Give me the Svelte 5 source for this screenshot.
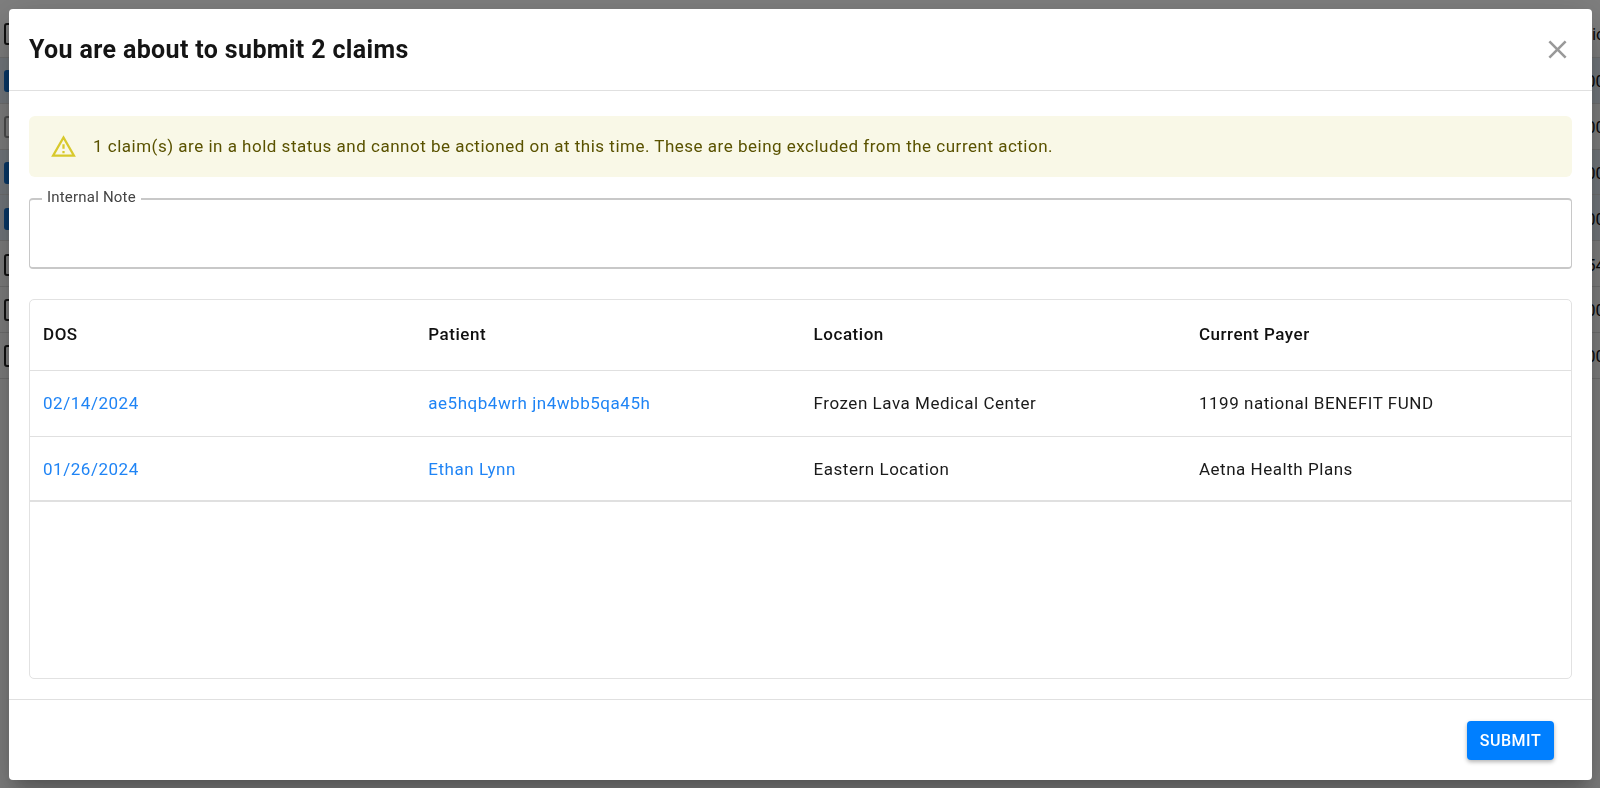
<script>
  const claims = [
    { dos: "02/14/2024", patient: "ae5hqb4wrh jn4wbb5qa45h", location: "Frozen Lava Medical Center", payer: "1199 national BENEFIT FUND" },
    { dos: "01/26/2024", patient: "Ethan Lynn", location: "Eastern Location", payer: "Aetna Health Plans" },
  ];
  // rows of the page behind the dialog
  const backRows = [
    { kind: "checked", end: "00" },
    { kind: "muted", end: "00" },
    { kind: "checked", end: "00" },
    { kind: "checked", end: "00" },
    { kind: "", end: "54" },
    { kind: "", end: "00" },
    { kind: "", end: "00" },
  ];
</script>

<div class="page">
  <div class="back-head">
    <span class="box"></span>
    <span class="end">ic</span>
  </div>
  {#each backRows as row}
    <div class="back-row" class:selected={row.kind === "checked"}>
      <span class="box {row.kind}"></span>
      <span class="end">{row.end}</span>
    </div>
  {/each}
</div>

<div class="backdrop">
  <div class="modal">
    <header class="modal-head">
      <h2>You are about to submit 2 claims</h2>
      <button class="close" aria-label="Close">
        <svg viewBox="0 0 24 24"><path d="M19 6.41 17.59 5 12 10.59 6.41 5 5 6.41 10.59 12 5 17.59 6.41 19 12 13.41 17.59 19 19 17.59 13.41 12z" /></svg>
      </button>
    </header>

    <div class="modal-body">
      <div class="alert">
        <svg width="27" height="27" viewBox="0 0 24 24"><path d="M1 21h22L12 2 1 21zm3.47-2L12 5.99 19.53 19H4.47zM11 16h2v2h-2zm0-6h2v4h-2z" /></svg>
        <span class="alert-text">1 claim(s) are in a hold status and cannot be actioned on at this time. These are being excluded from the current action.</span>
      </div>

      <fieldset class="note">
        <legend>Internal Note</legend>
      </fieldset>

      <div class="table-wrap">
        <div class="row head">
          <div>DOS</div>
          <div>Patient</div>
          <div>Location</div>
          <div>Current Payer</div>
        </div>
        {#each claims as c}
          <div class="row">
            <div class="link">{c.dos}</div>
            <div class="link">{c.patient}</div>
            <div>{c.location}</div>
            <div>{c.payer}</div>
          </div>
        {/each}
      </div>
    </div>

    <footer class="modal-foot">
      <button class="submit">SUBMIT</button>
    </footer>
  </div>
</div>

<style>
  :global(body) {
    font-family: Roboto, "Liberation Sans", sans-serif;
    overflow: hidden;
  }

  .page {
    height: 788px;
    background: #fff;
    overflow: hidden;
    padding-top: 11px;
    box-sizing: border-box;
  }

  .back-head,
  .back-row {
    display: flex;
    align-items: center;
    justify-content: space-between;
    height: 45.8px;
    box-sizing: border-box;
    border-bottom: 1px solid #e0e0e0;
    padding: 2px 0 0 4px;
    font-size: 17px;
    color: #111;
  }

  .back-head {
    height: 47px;
    padding-top: 0;
  }

  .back-row.selected {
    background: #e6f0fa;
  }

  .box {
    width: 18px;
    height: 22px;
    border: 2px solid #222;
    border-radius: 3px;
    box-sizing: border-box;
  }

  .box.checked {
    background: #1070d0;
    border-color: #1070d0;
  }

  .box.muted {
    border-color: #999;
  }

  .end {
    margin-right: -5px;
    white-space: nowrap;
  }

  .backdrop {
    position: fixed;
    inset: 0;
    background: rgba(0, 0, 0, 0.5);
    padding: 9px 8px 8px 9px;
    box-sizing: border-box;
    display: flex;
  }

  .modal {
    flex: 1;
    min-width: 0;
    display: flex;
    flex-direction: column;
    background: #fff;
    border-radius: 4px;
    box-shadow: 0 11px 15px -7px rgba(0, 0, 0, 0.2), 0 24px 38px 3px rgba(0, 0, 0, 0.14), 0 9px 46px 8px rgba(0, 0, 0, 0.12);
  }

  .modal-head {
    height: 82px;
    flex: none;
    display: flex;
    align-items: center;
    justify-content: space-between;
    padding: 0 17px 0 20px;
    box-sizing: border-box;
    border-bottom: 1px solid #e0e0e0;
  }

  h2 {
    margin: 0;
    font-size: 25px;
    font-weight: 700;
    letter-spacing: 0.36px;
    color: #151515;
  }

  .close {
    width: 36px;
    height: 36px;
    padding: 0;
    border: 0;
    background: none;
    display: flex;
    align-items: center;
    justify-content: center;
    fill: #999;
  }

  .close svg {
    width: 31px;
    height: 31px;
    flex: none;
  }

  .modal-body {
    flex: 1;
    min-height: 0;
    display: flex;
    flex-direction: column;
    padding: 25px 20px 20px;
  }

  .alert {
    height: 61px;
    flex: none;
    display: flex;
    align-items: center;
    gap: 16px;
    padding: 0 21px;
    background: #f9f8e7;
    border-radius: 6px;
    color: #5a5200;
    font-size: 17px;
    letter-spacing: 0.5px;
  }

  .alert svg {
    fill: #d8c92c;
    flex: none;
  }

  .alert-text {
    margin-top: -2px;
  }

  .note {
    height: 81px;
    flex: none;
    margin: 11px 0 0;
    padding: 0 0 0 12px;
    border: 1px solid #c8c8c8;
    border-width: 2px 1px;
    border-radius: 4px;
    box-sizing: border-box;
  }

  legend {
    padding: 0 5px 4px;
    font-size: 15px;
    letter-spacing: 0.2px;
    color: #444;
  }

  .table-wrap {
    flex: 1;
    margin-top: 30px;
    border: 1px solid #e2e2e2;
    border-radius: 5px;
  }

  .row {
    display: grid;
    grid-template-columns: repeat(3, 385.3px) 1fr;
    align-items: center;
    height: 66px;
    padding: 0 0 2px 13px;
    box-sizing: border-box;
    border-bottom: 1px solid #e0e0e0;
    font-size: 17px;
    letter-spacing: 0.53px;
    color: #1a1a1a;
  }

  .row.head {
    height: 71px;
    font-weight: 500;
    color: #111;
  }

  .row:last-child {
    height: 65px;
    padding-bottom: 0;
    border-bottom-width: 2px;
  }

  .link {
    color: #1f84f5;
  }

  .modal-foot {
    height: 81px;
    flex: none;
    display: flex;
    align-items: center;
    justify-content: flex-end;
    padding: 0 38px 0 0;
    box-sizing: border-box;
    border-top: 1px solid #e0e0e0;
  }

  .submit {
    width: 87px;
    height: 39px;
    border: 0;
    border-radius: 4px;
    background: #007fff;
    color: #fff;
    font: 500 16px Roboto, sans-serif;
    letter-spacing: 0.5px;
    box-shadow: 0 2px 4px rgba(0, 0, 0, 0.3);
  }
</style>
